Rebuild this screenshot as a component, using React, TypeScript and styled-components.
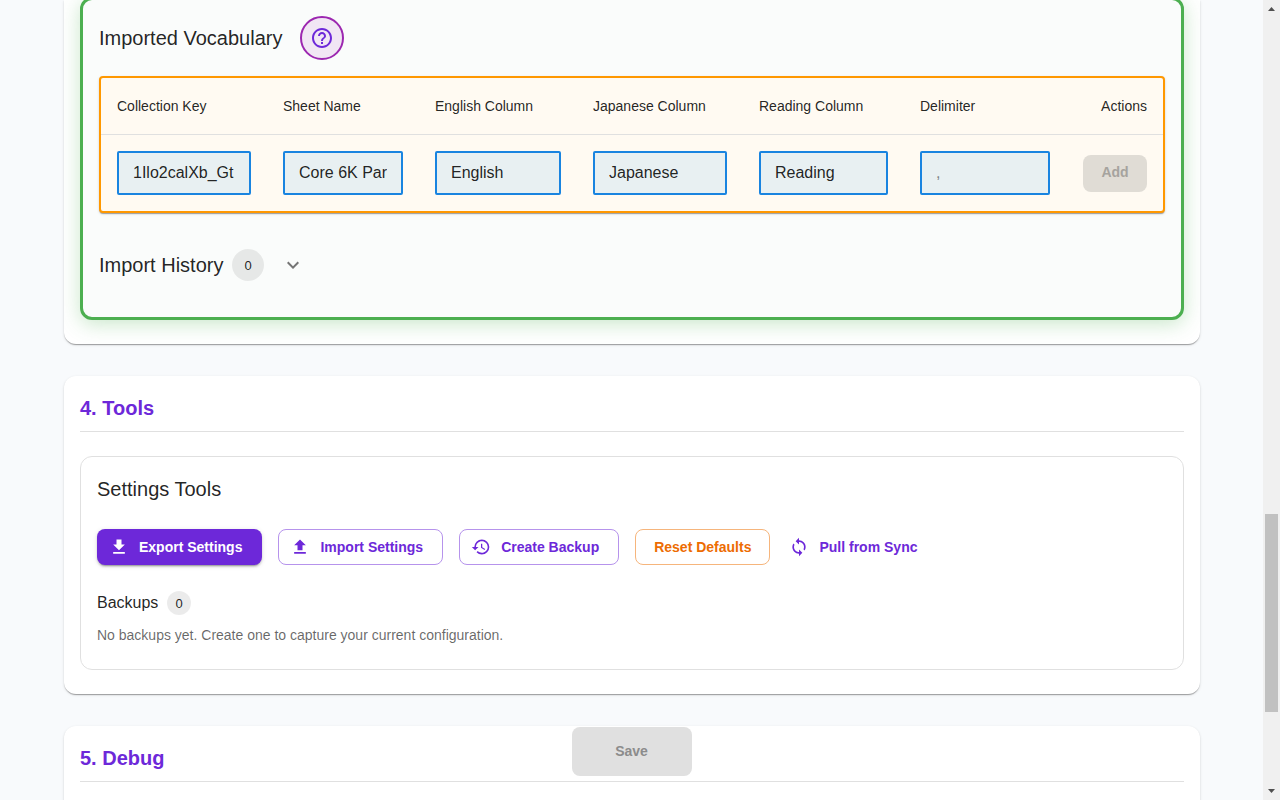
import React from "react";
import styled, { createGlobalStyle, css } from "styled-components";
import {
  MdDownload,
  MdExpandMore,
  MdHelpOutline,
  MdHistory,
  MdSync,
  MdUpload,
} from "react-icons/md";

const GlobalStyle = createGlobalStyle`
  *, *::before, *::after { box-sizing: border-box; }
  body {
    margin: 0;
    overflow: hidden;
    background: #f8fafc;
    color: rgba(0, 0, 0, 0.87);
    font-family: "Liberation Sans", Arial, sans-serif;
    font-size: 14px;
  }
  button, input { font: inherit; }
`;

const paperShadow = css`
  box-shadow: 0 2px 1px -1px rgba(0, 0, 0, 0.2), 0 1px 1px rgba(0, 0, 0, 0.14),
    0 1px 3px rgba(0, 0, 0, 0.12);
`;

const Shell = styled.div`
  display: flex;
  height: 100vh;
  overflow: hidden;
`;

const Page = styled.main`
  flex: 1;
  min-width: 0;
  display: flex;
  flex-direction: column;
  gap: 32px;
  padding: 0 63px 0 64px;
  overflow: hidden;
`;

const Card = styled.section<{ $continued?: boolean }>`
  flex: none;
  padding: ${(p) => (p.$continued ? "0 16px 24px" : "16px 16px 24px")};
  border-radius: ${(p) => (p.$continued ? "0 0 12px 12px" : "12px")};
  background: #fff;
  overflow: hidden;
  ${paperShadow}
`;

const SectionTitle = styled.h2`
  margin: 0 0 24px;
  padding-bottom: 7px;
  border-bottom: 1px solid #e0e0e0;
  color: #6d28d9;
  font-size: 20px;
  font-weight: 600;
  line-height: 32px;
`;

const ImportPanel = styled.div`
  display: flex;
  flex-direction: column;
  gap: 16px;
  margin-top: -3px;
  padding: 16px;
  border: 3px solid #4caf50;
  border-radius: 12px;
  background: #fafcfb;
  box-shadow: 0 4px 20px rgba(76, 175, 80, 0.3);
`;

const PanelHeader = styled.div`
  display: flex;
  align-items: center;
  gap: 18px;
`;

const PanelTitle = styled.h3`
  margin: 0;
  font-size: 20px;
  font-weight: 400;
  line-height: 32px;
`;

const HelpButton = styled.button`
  display: flex;
  align-items: center;
  justify-content: center;
  width: 44px;
  height: 44px;
  padding: 0;
  border: 2px solid #9c27b0;
  border-radius: 50%;
  background: #f1e6f4;
  color: #6d28d9;
  font-size: 24px;
`;

const TableFrame = styled.div`
  border: 2px solid #ff9800;
  border-radius: 4px;
  background: #fffaf2;
  ${paperShadow}
`;

const Table = styled.table`
  width: 100%;
  table-layout: fixed;
  border-collapse: separate;
  border-spacing: 0;
`;

const Col = styled.col<{ $width: number }>`
  width: ${(p) => p.$width}px;
`;

const HeadCell = styled.th<{ $end?: boolean }>`
  height: 57px;
  padding: 0 16px;
  border-bottom: 1px solid #e0e0e0;
  font-weight: 400;
  line-height: 24px;
  text-align: ${(p) => (p.$end ? "right" : "left")};
  white-space: nowrap;
`;

const Cell = styled.td`
  padding: 16px;
`;

const Field = styled.input`
  display: block;
  width: 100%;
  height: 44px;
  padding: 0 14px;
  border: 2px solid #1984e0;
  border-radius: 2px;
  background: #e8f0f2;
  color: rgba(0, 0, 0, 0.87);
  font-size: 16px;
  outline: none;
  &::placeholder {
    color: #7f8689;
    opacity: 1;
  }
`;

const HistoryRow = styled.div`
  display: flex;
  align-items: center;
  gap: 9px;
  padding: 20px 0;
`;

const Chip = styled.span<{ $large?: boolean }>`
  display: inline-flex;
  align-items: center;
  height: ${(p) => (p.$large ? 32 : 24)}px;
  padding: 0 ${(p) => (p.$large ? 12 : 8)}px;
  border-radius: 16px;
  background: rgba(0, 0, 0, 0.08);
  font-size: 13px;
`;

const ExpandButton = styled.button`
  display: flex;
  padding: 0 8px;
  border: 0;
  background: none;
  color: #757575;
  font-size: 24px;
`;

const ToolsPanel = styled.div`
  padding: 16px 16px 24px;
  border: 1px solid #e0e0e0;
  border-radius: 12px;
`;

const ButtonRow = styled.div`
  display: flex;
  flex-wrap: wrap;
  gap: 16px;
  margin: 24px 0 26px;
`;

type Variant = "contained" | "outlined" | "warning" | "text";

const variants = {
  contained: css`
    padding: 0 19px 0 11px;
    background: #6d28d9;
    color: #fff;
    box-shadow: 0 3px 1px -2px rgba(0, 0, 0, 0.2),
      0 2px 2px rgba(0, 0, 0, 0.14), 0 1px 5px rgba(0, 0, 0, 0.12);
  `,
  outlined: css`
    padding: 0 19px 0 11px;
    border-color: #b693ec;
    color: #6d28d9;
  `,
  warning: css`
    padding: 0 18px;
    border-color: #f6b57c;
    color: #ed6c02;
  `,
  text: css`
    padding: 0 8px 0 2px;
    color: #6d28d9;
  `,
};

const ToolButton = styled.button<{ $variant: Variant }>`
  display: inline-flex;
  align-items: center;
  gap: 10px;
  height: 36px;
  border: 1px solid transparent;
  border-radius: 8px;
  background: transparent;
  font-weight: 600;
  white-space: nowrap;
  svg {
    width: 20px;
    height: 20px;
  }
  ${(p) => variants[p.$variant]}
`;

const AddButton = styled.button`
  display: block;
  width: 64px;
  height: 37px;
  margin-left: auto;
  padding: 0 0 2px;
  border: 0;
  border-radius: 8px;
  background: #e0dcd5;
  color: #a6a39e;
  font-weight: 600;
`;

const BackupsRow = styled.div`
  display: flex;
  align-items: center;
  gap: 9px;
`;

const BackupsTitle = styled.h4`
  margin: 0;
  font-size: 16px;
  font-weight: 400;
  line-height: 24px;
`;

const Hint = styled.p`
  margin: 10px 0 0;
  color: rgba(0, 0, 0, 0.6);
  line-height: 20px;
`;

const SaveBar = styled.div`
  position: fixed;
  right: 17px;
  bottom: 24px;
  left: 0;
  display: flex;
  justify-content: center;
`;

const SaveButton = styled.button`
  width: 120px;
  height: 49px;
  padding: 0 0 2px;
  border: 0;
  border-radius: 8px;
  background: #e0e0e0;
  color: #8c8c8c;
  font-weight: 600;
`;

const ScrollBar = styled.div`
  flex: none;
  display: flex;
  flex-direction: column;
  width: 17px;
  background: #f0f0f0;
`;

const ScrollArrow = styled.svg`
  display: block;
  width: 17px;
  height: 17px;
  fill: #505050;
`;

const ScrollPart = styled.div<{ $size: number; $thumb?: boolean }>`
  flex: ${(p) => p.$size} 1 0;
  margin: 0 2px;
  background: ${(p) => (p.$thumb ? "#c1c1c1" : "transparent")};
`;

const columns = [
  { label: "Collection Key", width: 166, value: "1Ilo2calXb_Gt" },
  { label: "Sheet Name", width: 152, value: "Core 6K Par" },
  { label: "English Column", width: 158, value: "English" },
  { label: "Japanese Column", width: 166, value: "Japanese" },
  { label: "Reading Column", width: 161, value: "Reading" },
  { label: "Delimiter", width: 162, value: "", placeholder: "," },
];

export default function App() {
  return (
    <>
      <GlobalStyle />
      <Shell>
        <Page>
          <Card $continued>
            <ImportPanel>
              <PanelHeader>
                <PanelTitle>Imported Vocabulary</PanelTitle>
                <HelpButton type="button" aria-label="Help">
                  <MdHelpOutline />
                </HelpButton>
              </PanelHeader>
              <TableFrame>
                <Table>
                  <colgroup>
                    {columns.map((c) => (
                      <Col key={c.label} $width={c.width} />
                    ))}
                    <Col $width={97} />
                  </colgroup>
                  <thead>
                    <tr>
                      {columns.map((c) => (
                        <HeadCell key={c.label} scope="col">
                          {c.label}
                        </HeadCell>
                      ))}
                      <HeadCell scope="col" $end>
                        Actions
                      </HeadCell>
                    </tr>
                  </thead>
                  <tbody>
                    <tr>
                      {columns.map((c) => (
                        <Cell key={c.label}>
                          <Field
                            type="text"
                            aria-label={c.label}
                            defaultValue={c.value}
                            placeholder={c.placeholder}
                          />
                        </Cell>
                      ))}
                      <Cell>
                        <AddButton type="button" disabled>
                          Add
                        </AddButton>
                      </Cell>
                    </tr>
                  </tbody>
                </Table>
              </TableFrame>
              <HistoryRow>
                <PanelTitle>Import History</PanelTitle>
                <Chip $large>0</Chip>
                <ExpandButton type="button" aria-label="Expand">
                  <MdExpandMore />
                </ExpandButton>
              </HistoryRow>
            </ImportPanel>
          </Card>

          <Card>
            <SectionTitle>4. Tools</SectionTitle>
            <ToolsPanel>
              <PanelTitle>Settings Tools</PanelTitle>
              <ButtonRow>
                <ToolButton type="button" $variant="contained">
                  <MdDownload />
                  Export Settings
                </ToolButton>
                <ToolButton type="button" $variant="outlined">
                  <MdUpload />
                  Import Settings
                </ToolButton>
                <ToolButton type="button" $variant="outlined">
                  <MdHistory />
                  Create Backup
                </ToolButton>
                <ToolButton type="button" $variant="warning">
                  Reset Defaults
                </ToolButton>
                <ToolButton type="button" $variant="text">
                  <MdSync />
                  Pull from Sync
                </ToolButton>
              </ButtonRow>
              <BackupsRow>
                <BackupsTitle>Backups</BackupsTitle>
                <Chip>0</Chip>
              </BackupsRow>
              <Hint>
                No backups yet. Create one to capture your current
                configuration.
              </Hint>
            </ToolsPanel>
          </Card>

          <Card>
            <SectionTitle>5. Debug</SectionTitle>
          </Card>
        </Page>

        <ScrollBar aria-hidden="true">
          <ScrollArrow viewBox="0 0 17 17">
            <path d="M5 11 8.500 7 12 11z" />
          </ScrollArrow>
          <ScrollPart $size={497} />
          <ScrollPart $size={198} $thumb />
          <ScrollPart $size={71} />
          <ScrollArrow viewBox="0 0 17 17">
            <path d="M5 6 8.500 10 12 6z" />
          </ScrollArrow>
        </ScrollBar>
      </Shell>

      <SaveBar>
        <SaveButton type="button" disabled>
          Save
        </SaveButton>
      </SaveBar>
    </>
  );
}
